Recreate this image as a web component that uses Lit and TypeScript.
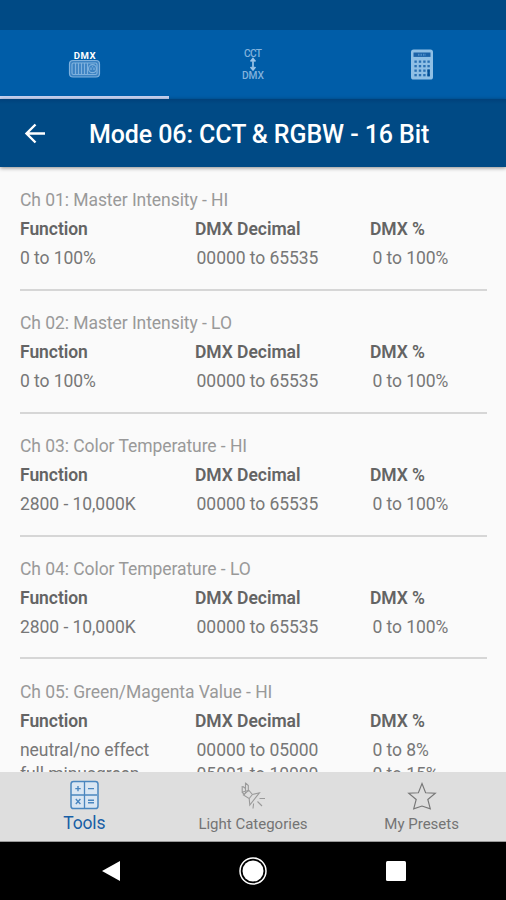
import { LitElement, html, css, svg } from "lit";
import { customElement, property } from "lit/decorators.js";

interface Channel {
  name: string;
  rows: [string, string, string][];
}

const FULL = "00000 to 65535";
const CHANNELS: Channel[] = [
  { name: "Ch 01: Master Intensity - HI", rows: [["0 to 100%", FULL, "0 to 100%"]] },
  { name: "Ch 02: Master Intensity - LO", rows: [["0 to 100%", FULL, "0 to 100%"]] },
  { name: "Ch 03: Color Temperature - HI", rows: [["2800 - 10,000K", FULL, "0 to 100%"]] },
  { name: "Ch 04: Color Temperature - LO", rows: [["2800 - 10,000K", FULL, "0 to 100%"]] },
  {
    name: "Ch 05: Green/Magenta Value - HI",
    rows: [
      ["neutral/no effect", "00000 to 05000", "0 to 8%"],
      ["full minusgreen", "05001 to 10000", "0 to 15%"],
    ],
  },
];

const dmxIcon = html`<svg width="34" height="30" viewBox="0 0 34 30">
  <text x="17.7" y="8.8" text-anchor="middle" font-size="9.6" font-weight="700" textLength="22" fill="#fff">DMX</text>
  <g fill="none" stroke="#7fb1dd" stroke-width="1.2">
    <rect x="2.5" y="10.5" width="30" height="16.5" rx="3.5" fill="#3b82c2" />
    <rect x="5" y="13" width="25" height="11.5" rx="1.5" />
    <path d="M8.5 13V24.5M11.5 13V24.5M14.5 13V24.5M17.5 13V24.5M20.5 13V24.5" />
    <circle cx="25.5" cy="18.7" r="4" />
    <path d="M24 17.5v2.5M27 17.5v2.5M25.5 16.3v1" />
  </g>
</svg>`;

const cctIcon = html`<svg width="30" height="34" viewBox="0 0 30 34">
  <g fill="#82b2dc" text-anchor="middle" font-size="10.2" font-weight="500">
    <text x="15" y="8.5" textLength="18">CCT</text>
    <text x="15" y="30.5" textLength="22">DMX</text>
  </g>
  <path d="M15 11.500v9M12.600 13.500l2.400-3 2.400 3M12.600 19l2.400 3 2.400-3" fill="none" stroke="#9cc4e7" stroke-width="1.7" />
</svg>`;

const calcIcon = html`<svg width="24" height="32" viewBox="0 0 24 32">
  <rect x="1" y="0.5" width="22" height="30" rx="2.6" fill="#8fbfe5" />
  <rect x="3.5" y="3.5" width="17" height="4.4" fill="#1b62a8" />
  <path d="M8 5.7h8" stroke="#4e8dc6" stroke-width="2" stroke-dasharray="1.5 1" />
  <g fill="#2a70b2">
    ${[11.5, 16, 20.5, 25].map((y) =>
      [4.4, 8.8, 13.2, 17.4].map((x) => svg`<rect x=${x} y=${y} width="2.4" height="2.3" />`),
    )}
    <rect x="17.4" y="20.5" width="2.4" height="6.8" fill="#004f96" />
  </g>
</svg>`;

const toolsIcon = html`<svg width="30" height="30" viewBox="0 0 30 30" fill="none" stroke="#4a86bf">
  <rect x="2" y="1.5" width="27" height="27" rx="2.6" fill="#d9e6f3" stroke-width="1.5" />
  <path d="M15.5 2v26M2 15h26" stroke-width="1.3" />
  <path d="M6.300 8.600h5.400M9 5.900v5.400M19 8.600h6M6.800 19l4.600 5M11.400 19l-4.600 5M19 20.200h6M19 22.800h6" stroke-width="1.4" />
</svg>`;

const lightIcon = html`<svg width="30" height="30" viewBox="0 0 30 30" fill="none" stroke="#9a9a9a" stroke-width="1.1">
  <path d="M7.500 1.500v10.500M4.200 5v6.500l2.500 2M7.500 2l2.800 2.500v6M4.500 11l6-1.500M5 5.500l2.500 2" />
  <path d="M5.400 14l5.400-4.800 3.600 4.300 7-1.700-9.600 12.200-.6-6.500zM11.200 17.500l3.200-4" />
  <path d="M21.500 17.500h5.500M19.500 20.500l4.500 4.500M15.600 22.500l-.6 5" />
</svg>`;

const starIcon = html`<svg width="30" height="30" viewBox="0 0 30 30" fill="none" stroke="#777" stroke-width="1.15">
  <path d="M15 2.500l3.600 9.200 9.700.5-7.500 6.300 2.500 9.300L15 25l-8.300 2.800 2.500-9.300-7.500-6.300 9.700-.5z" />
</svg>`;

@customElement("channel-card")
class ChannelCard extends LitElement {
  @property({ attribute: false }) channel!: Channel;

  static styles = css`
    :host {
      display: block;
      flex: none;
      box-sizing: border-box;
      min-height: 122.85px;
      padding-top: 18.4px;
      border-bottom: 2px solid #d6d6d6;
      color: #777;
      font-size: 17.5px;
      letter-spacing: -0.06px;
    }
    .name { line-height: 29px; color: #999; }
    .grid { display: grid; grid-template-columns: 175px 175px 1fr; white-space: nowrap; }
    .head { line-height: 29px; font-weight: 600; color: #646464; font-size: 17.5px; letter-spacing: -0.05px; }
    .row { line-height: 24px; }
    .row:nth-of-type(3) { margin-top: 2px; }
    .row :not(:first-child) { padding-left: 1.6px; }
    .row :last-child { padding-left: 2.4px; }
  `;

  render() {
    return html`
      <div class="name">${this.channel.name}</div>
      <div class="grid head"><span>Function</span><span>DMX Decimal</span><span>DMX %</span></div>
      ${this.channel.rows.map(
        (r) => html`<div class="grid row">${r.map((c) => html`<span>${c}</span>`)}</div>`,
      )}
    `;
  }
}

@customElement("app-root")
class AppRoot extends LitElement {
  static styles = css`
    :host {
      display: flex;
      flex-direction: column;
      height: 900px;
      overflow: hidden;
      background: #fafafa;
      font-family: Roboto, "Liberation Sans", sans-serif;
    }
    svg { display: block; }
    .status { flex: none; height: 30px; background: #004a85; }
    .tabs { flex: none; height: 69px; display: grid; grid-template-columns: repeat(3, 1fr); background: #005da8; }
    .tab { display: flex; align-items: center; justify-content: center; border-bottom: 3px solid transparent; padding-top: 3px; box-sizing: border-box; }
    .tab.active { border-color: #c6d3f3; }
    .bar {
      flex: none;
      height: 68px;
      display: flex;
      align-items: center;
      background: linear-gradient(#00417b, #004a85 5px);
      color: #fff;
      box-shadow: 0 1px 4px rgba(0, 0, 0, 0.45);
      position: relative;
    }
    .back { margin-left: 23px; width: 66px; }
    .title { font-size: 25px; font-weight: 500; letter-spacing: -0.1px; white-space: nowrap; padding-top: 3px; }
    .list { flex: 1; min-height: 0; overflow: hidden; display: flex; flex-direction: column; padding: 1px 19px 0 20px; }
    .nav { flex: none; height: 70px; display: grid; grid-template-columns: repeat(3, 1fr); background: #dedede; border-bottom: 1px solid #999; box-sizing: border-box; }
    .item { display: flex; flex-direction: column; align-items: center; color: #747474; font-size: 15px; padding-top: 8px; }
    .item span { line-height: 20px; margin-top: 4px; }
    .item:not(.active) svg { margin-top: 1px; margin-bottom: -1px; }
    .item.active { color: #185fa6; font-size: 17.5px; letter-spacing: -0.15px; }
    .item.active span { margin-top: 3px; }
    .system { flex: none; height: 58px; display: grid; grid-template-columns: 1fr 60px 1fr; align-items: center; background: #000; }
    .sys { display: flex; justify-content: center; }
    .sys:first-child svg { margin-right: 2px; }
    .sys:last-child svg { margin-left: 2px; }
  `;

  render() {
    return html`
      <div class="status"></div>
      <div class="tabs">
        <div class="tab active">${dmxIcon}</div>
        <div class="tab">${cctIcon}</div>
        <div class="tab">${calcIcon}</div>
      </div>
      <div class="bar">
        <div class="back">
          <svg width="24" height="24" viewBox="0 0 24 24" fill="none" stroke="#fff" stroke-width="2.4">
            <path d="M22 12.5H4M12.5 3.5L3.5 12.5l9 9" />
          </svg>
        </div>
        <div class="title">Mode 06: CCT &amp; RGBW - 16 Bit</div>
      </div>
      <div class="list">
        ${CHANNELS.map((c) => html`<channel-card .channel=${c}></channel-card>`)}
      </div>
      <div class="nav">
        <div class="item active">${toolsIcon}<span>Tools</span></div>
        <div class="item">${lightIcon}<span>Light Categories</span></div>
        <div class="item">${starIcon}<span>My Presets</span></div>
      </div>
      <div class="system">
        <div class="sys"><svg width="20" height="24" viewBox="0 0 20 24"><path d="M19 2v20L1 12z" fill="#fff" /></svg></div>
        <div class="sys">
          <svg width="30" height="30" viewBox="0 0 30 30"><circle cx="15" cy="15" r="13" fill="none" stroke="#fff" stroke-width="1.5" /><circle cx="15" cy="15" r="10.5" fill="#fff" /></svg>
        </div>
        <div class="sys"><svg width="20" height="20" viewBox="0 0 20 20"><rect width="20" height="20" rx="1.5" fill="#fff" /></svg></div>
      </div>
    `;
  }
}
